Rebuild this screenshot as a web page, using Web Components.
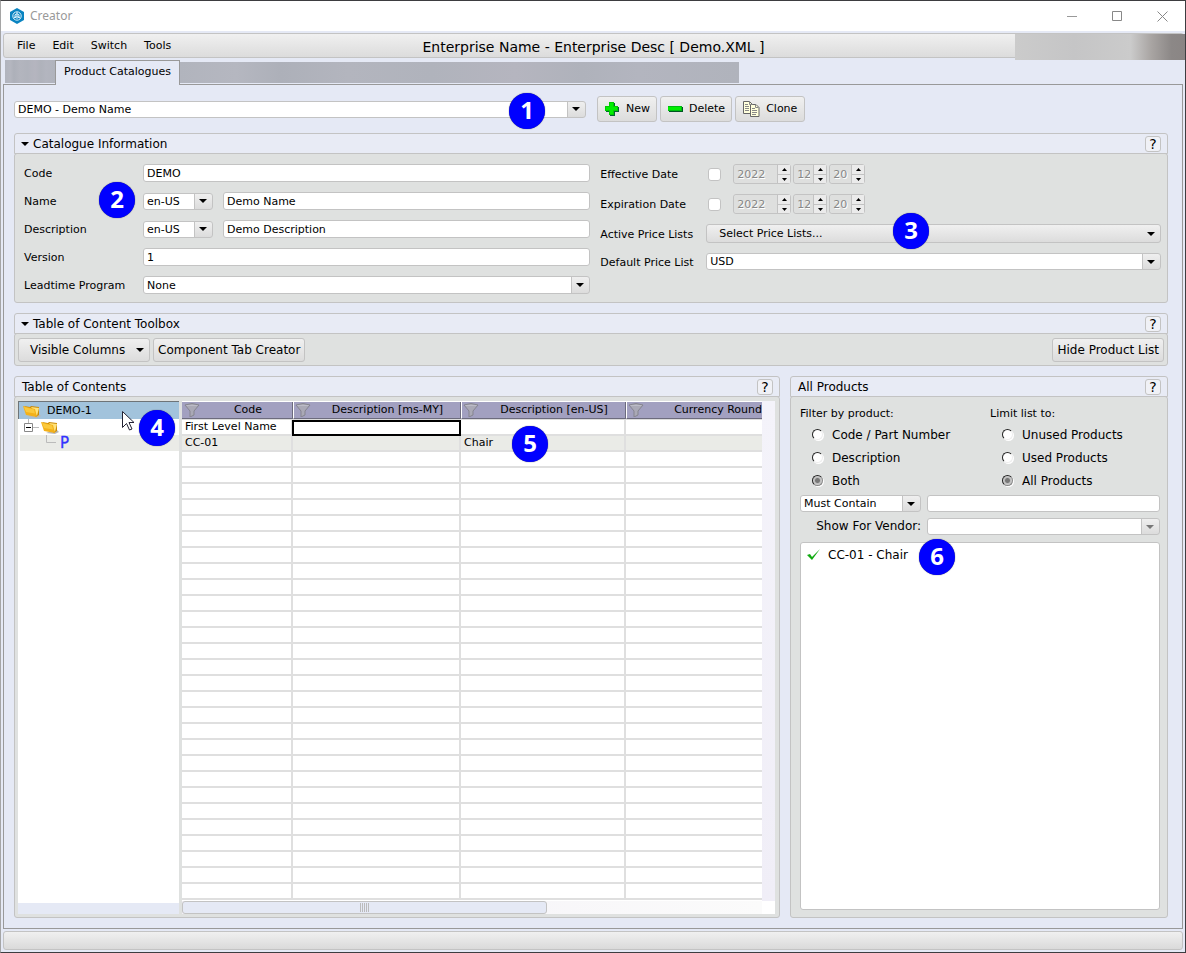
<!DOCTYPE html>
<html lang="en">
<head>
<meta charset="utf-8">
<title>Creator</title>
<style>
  body { margin: 0; background: #e5e9f5; color: #000; font: 11px/14px "DejaVu Sans", Verdana, sans-serif; }
</style>
</head>
<body>
<creator-app></creator-app>

<script>
const arrow = (c = '%23000') => `url("data:image/svg+xml,%3Csvg xmlns='http://www.w3.org/2000/svg' width='8' height='4'%3E%3Cpath d='M0 0h8L4 4z' fill='${c}'/%3E%3C/svg%3E")`;

const base = `
  *, *::before, *::after { box-sizing: border-box; }
  button, input, select { font: inherit; color: inherit; margin: 0; }
  input[type=text] {
    display: block; width: 100%; min-width: 0; height: 18px; padding: 0 3px;
    border: 1px solid #c3c3c3; border-radius: 3px; background: #fff; outline: 0;
  }
  select {
    appearance: none; display: block; width: 100%; height: 17px; padding: 0 20px 0 3px;
    line-height: 15px; border: 1px solid #c3c3c3; border-radius: 3px; outline: 0;
    background:
      ${arrow()} right 5px center no-repeat,
      linear-gradient(#c3c3c3, #c3c3c3) right 17px top / 1px 100% no-repeat,
      linear-gradient(#efefef, #dcdcdc) right top / 17px 100% no-repeat, #fff;
  }
  select:disabled {
    opacity: 1;
    background:
      ${arrow('%23777')} right 5px center no-repeat,
      linear-gradient(#c3c3c3, #c3c3c3) right 17px top / 1px 100% no-repeat,
      linear-gradient(#efefef, #dcdcdc) right top / 17px 100% no-repeat, #fff;
  }
  button {
    display: inline-flex; align-items: center; justify-content: center; gap: 6px; white-space: nowrap;
    border: 1px solid #c3c3c3; border-radius: 3px; padding: 0 6px;
    background: linear-gradient(#f0f0f0, #dcdcdc);
  }
  .drop { justify-content: space-between; padding: 0 5px 0 12px; }
  .drop::after { content: ""; width: 8px; height: 4px; background: ${arrow()}; }
`;

function define(name, css, html) {
  const template = document.createElement('template');
  template.innerHTML = `<style>${base}${css}</style>${html}`;
  customElements.define(name, class extends HTMLElement {
    constructor() {
      super();
      this.attachShadow({ mode: 'open' }).append(template.content.cloneNode(true));
    }
  });
}

/* Numbered marker that floats over the window */
define('call-out', `
  :host {
    position: absolute; width: 36px; height: 36px; border-radius: 50%; background: #00f; color: #fff;
    text-align: center; font: 700 24px/34px "Open Sans", "Noto Sans", sans-serif;
    box-shadow: 0 0 1px #333;
  }`, `<slot></slot>`);

/* Titled panel: header strip, optional fold arrow, help button, body */
define('ui-panel', `
  :host { display: flex; flex-direction: column; min-width: 0; }
  header {
    display: flex; align-items: center; height: 21px; padding: 1px 6px 0 7px;
    border: 1px solid #c3c3c3; border-radius: 3px 3px 0 0; background: #e8ebf5;
  }
  .title { flex: 1; font-size: 12px; }
  .fold { display: none; width: 8px; height: 4px; margin: 0 4px 0 -1px; background: ${arrow()}; }
  :host([foldable]) .fold { display: block; }
  header button { width: 16px; height: 16px; padding: 0; background: #f0f1f6; font-size: 14px; line-height: 14px; }
  .body {
    flex: 1; display: flex; flex-direction: column; margin-top: -1px;
    border: 1px solid #c3c3c3; border-radius: 3px; background: #dfe1e0;
  }
  ::slotted(*) { flex: 1; }`,
  `<header><span class="fold"></span><span class="title"><slot name="title"></slot></span>
   <button aria-label="Help">?</button></header>
   <div class="body"><slot></slot></div>`);

define('title-bar', `
  :host { display: flex; align-items: center; height: 30px; padding: 0 11px 0 8px; background: #fff; }
  .name { flex: 1; margin-left: 5px; color: #999; font: 12px/16px "Noto Sans", "Open Sans", sans-serif; }
  .controls { display: flex; gap: 21px; }
  button { width: 24px; height: 24px; padding: 0; border: 0; background: none; }
  svg { display: block; }`,
  `<svg width="16" height="16" viewBox="0 0 16 16"><path d="M8 0l7 4v8l-7 4-7-4V4z" fill="#0a84c1"/>
    <g fill="none" stroke="#d7f0fb" stroke-width="1"><circle cx="8" cy="8" r="4.2"/><path d="M8 4v4l3.4 2M8 8l-3.4 2M6 6.8L8 5.8l2 1v2.4l-2 1-2-1z"/></g></svg>
   <span class="name">Creator</span>
   <div class="controls">
    <button aria-label="Minimize"><svg width="11" height="11"><path d="M0 5.5h10" stroke="#999"/></svg></button>
    <button aria-label="Maximize"><svg width="11" height="11"><path d="M.5.5h9v9h-9z" fill="none" stroke="#888"/></svg></button>
    <button aria-label="Close"><svg width="11" height="11"><path d="M.5.5l10 10M10.5.5l-10 10" stroke="#888"/></svg></button>
   </div>`);

define('menu-bar', `
  :host {
    position: relative; display: grid; grid-template-columns: 1fr auto 1fr; align-items: center;
    height: 25px; margin: 2px 1px 0 2px; border: 1px solid #c3c3c3; border-radius: 3px;
    background: linear-gradient(#f0f0f0, #dcdcdc);
  }
  nav { display: flex; padding-left: 7px; }
  nav button { border: 0; padding: 0 6px; margin-right: 5px; background: none; }
  h1 { margin: 0; padding-top: 2px; font-size: 14px; line-height: 16px; font-weight: normal; }
  .veil {
    position: absolute; right: -2px; top: 0; width: 170px; height: 26px;
    background: linear-gradient(90deg, #cbcbcb, #c5c5c6 35%, #cbcbcb 68%, #a9a5a3 80%, #8c8887 92%, #8a8584);
  }`,
  `<nav><button>File</button><button>Edit</button><button>Switch</button><button>Tools</button></nav>
   <h1>Enterprise Name - Enterprise Desc [ Demo.XML ]</h1><span class="veil"></span>`);

define('tab-strip', `
  :host { display: flex; align-items: flex-end; height: 25px; margin: 2px 2px 0 4px; }
  .dim { height: 21px; margin-bottom: 2px; background: linear-gradient(90deg, #b1b4bd, #b5b7c0 10%, #adb0b9 18%, #b3b5be 30%, #b0b3bc 45%, #b5b5bf 60%, #afb2bb 72%, #b3b5bf 82%, #b0b3bc); }
  .first { width: 50px; height: 23px; }
  .rest { width: 559px; }
  button {
    position: relative; z-index: 1; align-items: flex-start; width: 125px; height: 25px; padding: 4px 0 0;
    border-color: #999; border-bottom: 0; border-radius: 0; background: #e5e9f5;
  }`,
  `<span class="dim first"></span><button role="tab" aria-selected="true">Product Catalogues</button><span class="dim rest"></span>`);

define('catalogue-picker', `
  :host { display: flex; align-items: center; gap: 3px; margin-bottom: 1px; }
  select { width: 50%; max-width: 572px; margin-right: 8px; }
  button { height: 26px; }
  button:last-child { padding: 0 7px; }
  svg { display: block; }`,
  `<select aria-label="Catalogue"><option>DEMO - Demo Name</option></select>
   <button><svg width="16" height="16"><path d="M6 2h5v4h4v5h-4v4H6v-4H2V6h4z" fill="#063"/><path d="M5 1h5v4h4v5h-4v4H5v-4H1V5h4z" fill="#0c0"/><path d="M6 2h3v4h4v3H9v4H6V9H2V6h4z" fill="#0e0"/></svg>New</button>
   <button><svg width="16" height="16"><path d="M2 6h14v5H2z" fill="#052"/><path d="M1 5h14v5H1z" fill="#0b1"/><path d="M1 6h13v3H1z" fill="#0e0"/></svg>Delete</button>
   <button><svg width="17" height="16"><g fill="#ffffdc" stroke="#666"><path d="M.5.5h6l3 3v9h-9z"/><path d="M7.500 3.500h5.500l3 3v9h-8.500z"/></g><path d="M6.500.5v3h3M12.500 3.500v3h3M2 3.500h3M2 5.500h4M2 7.500h4M2 9.500h4M9 7.500h3M9 9.500h5M9 11.500h5M9 13.500h4" fill="none" stroke="#888"/></svg>Clone</button>`);

/* Year, month and day, each with a stepper */
const spin = (label, value, width) => `<span class="spin" style="width:${width}px"><input type="text" aria-label="${label}" value="${value}" disabled><span class="steps"><button disabled aria-label="Increase"><svg width="5" height="3"><path d="M0 3h5L2.500 0z"/></svg></button><button disabled aria-label="Decrease"><svg width="5" height="3"><path d="M0 0h5L2.500 3z"/></svg></button></span></span>`;
const date = name => `<span class="date"><input type="checkbox" id="${name}">${spin(name + ' year', '2022', 58)}${spin(name + ' month', '12', 34)}${spin(name + ' day', '20', 36)}</span>`;

define('catalogue-form', `
  :host { display: grid; grid-template-columns: 101fr 100fr; column-gap: 10px; align-items: start; padding: 10px 6px 8px 9px; }
  .col { display: grid; row-gap: 10px; align-items: center; }
  .left { grid-template-columns: 119px 1fr; }
  .right { grid-template: 20px 20px 19px 17px / 106px 1fr; }
  .left > * { height: 18px; }
  label { line-height: 18px; height: 18px; padding-top: 1px; }
  .pair { display: grid; grid-template-columns: 70px 1fr; gap: 10px; align-items: center; }
  .date { display: flex; align-items: center; gap: 2px; height: 20px; }
  input[type=checkbox] { appearance: none; width: 13px; height: 13px; margin: 0 10px 0 2px; border: 1px solid #c3c3c3; border-radius: 3px; background: #fff; }
  .spin { display: flex; height: 20px; border: 1px solid #c3c3c3; border-radius: 3px; }
  .spin input { flex: 1; height: 18px; border: 0; background: #dedfde; color: #888; text-shadow: 1px 1px #fff; }
  .steps { display: grid; grid-template-rows: 9px 9px; width: 13px; border-left: 1px solid #c3c3c3; flex: none; }
  .steps button { padding: 0; border: 0; border-radius: 0; background: #ebebeb; }
  .steps button + button { border-top: 1px solid #c3c3c3; }
  .drop { height: 19px; width: 100%; }`,
  `<div class="col left">
    <label for="code">Code</label><input type="text" id="code" value="DEMO">
    <label for="name">Name</label><div class="pair"><select aria-label="Name language"><option>en-US</option></select><input type="text" id="name" value="Demo Name"></div>
    <label for="desc">Description</label><div class="pair"><select aria-label="Description language"><option>en-US</option></select><input type="text" id="desc" value="Demo Description"></div>
    <label for="version">Version</label><input type="text" id="version" value="1">
    <label for="lead">Leadtime Program</label><select id="lead"><option>None</option></select>
   </div>
   <div class="col right">
    <label for="effective">Effective Date</label>${date('effective')}
    <label for="expiration">Expiration Date</label>${date('expiration')}
    <label for="lists">Active Price Lists</label><button class="drop" id="lists">Select Price Lists...</button>
    <label for="price">Default Price List</label><select id="price"><option>USD</option></select>
   </div>`);

define('toolbox-bar', `
  :host { display: flex; gap: 3px; padding: 4px 3px 3px; font-size: 12px; }
  button { height: 24px; padding: 0 4px; }
  .drop { width: 132px; padding: 0 5px 0 11px; }
  .end { margin-left: auto; }`,
  `<button class="drop">Visible Columns</button><button>Component Tab Creator</button><button class="end">Hide Product List</button>`);

const folder = `<svg class="folder" width="18" height="15"><path d="M5 13l9 1 4-2-3-3z" fill="#b9b9b9"/><path d="M1 2l6 1 1-1 8 1v8l-3 2z" fill="#c98a08"/><path d="M8 3l8 1-2 8z" fill="#ffe27a"/><path d="M0 2l12 3 2 8-11-2z" fill="#f3b11a"/><path d="M1 3l10 2.500 1 4L3 8z" fill="#fbc93c"/></svg>`;

define('contents-tree', `
  :host { display: flex; flex-direction: column; background: #fff; border-bottom: 11px solid #e5e9f5; }
  ul { list-style: none; margin: 0; padding: 0; }
  li { display: flex; align-items: center; height: 16px; }
  .root { height: 18px; padding: 1px 0 0 4px; gap: 6px; background: #a2c3dc; border: solid #6e7478; border-width: 1px 0 0 1px; }
  .leaf { background: #eaebe7; margin-left: 2px; padding-left: 22px; color: #33f; font-size: 15px; -webkit-text-stroke: 0.3px #33f; }
  .branch { padding-left: 6px; }
  svg { display: block; flex: none; }`,
  `<ul><li class="root">${folder}<span>DEMO-1</span></li>
    <li class="branch"><svg width="17" height="16"><path d="M4.500 0v4M9 8.500h6" stroke="#bbb"/><path d="M.5 4.500h8v8h-8z" fill="#fff" stroke="#888"/><path d="M2 8.500h5" stroke="#000"/></svg>${folder}</li>
    <li class="leaf"><svg width="18" height="16"><path d="M4.500 0v7.500H14" fill="none" stroke="#bbb"/></svg>P</li></ul>`);

const funnel = `<svg width="16" height="15"><path d="M1 3Q8 0 15 3L10 9v4l-4 2V9z" fill="#aaa9b6" stroke="#85848f"/><path d="M2.500 3.500h11" stroke="#bcbcc6"/></svg>`;
const head = text => `<th><span>${funnel}<b>${text}</b></span></th>`;
const row = (a, b, c) => `<tr><td>${a}</td><td>${b}</td><td>${c}</td><td></td></tr>`;

define('contents-grid', `
  :host { display: grid; grid-template-columns: 1fr 13px; grid-template-rows: 1fr 13px; min-width: 0; background: #fff; }
  .view { overflow: hidden; min-width: 0; }
  table { table-layout: fixed; border-collapse: separate; border-spacing: 0; width: 100%; min-width: 544px; }
  col.a { width: 111px; } col.b { width: 168px; } col.c { width: 165px; }
  th { height: 19px; padding: 1px 0 0; border-bottom: 1px solid #dcdcdc; font-weight: normal; }
  th > span { display: flex; align-items: center; height: 17px; padding-left: 2px; background: #a2a0c0; border-right: 1px solid #6c6b7d; border-bottom: 1px solid #6c6b7d; }
  th + th > span { border-left: 1px solid #fff; padding-left: 1px; }
  th svg { flex: none; margin-top: -2px; }
  b { flex: 1; font-weight: normal; white-space: nowrap; overflow: hidden; padding-left: 4px; text-align: center; }
  th:last-child span { border-right: 0; }
  th:last-child b { text-align: right; padding: 0; }
  td { height: 16px; padding: 0 0 0 3px; line-height: 14px; white-space: nowrap; border-bottom: 2px solid #dfdfdf; border-right: 2px solid #dfdfdf; }
  td:last-child { border-right: 0; }
  tr:nth-child(2) td { background: #eaebe7; }
  tr:first-child td:nth-child(2) { border-color: #000; box-shadow: -1px 0 #000, inset 1px 2px #000; }
  .v { background: linear-gradient(#f4f3fa, #f0eef7); }
  .h { background: linear-gradient(90deg, #f2eff6, #fbfbfb); min-width: 0; }
  .thumb { width: 63%; height: 13px; border: 1px solid #c3c3c3; border-radius: 3px; background: #e5e9f5; display: grid; place-items: center; }
  .thumb i { width: 9px; height: 9px; background: repeating-linear-gradient(90deg, #bbb 0 1px, transparent 1px 2px); }`,
  `<div class="view"><table><colgroup><col class="a"><col class="b"><col class="c"><col></colgroup>
    <thead><tr>${head('Code')}${head('Description [ms-MY]')}${head('Description [en-US]')}${head('Currency Round')}</tr></thead>
    <tbody>${row('First Level Name', '', '')}${row('CC-01', '', 'Chair')}${row('', '', '').repeat(28)}</tbody></table></div>
   <div class="v"></div><div class="h"><div class="thumb"><i></i></div></div>`);

define('contents-view', `
  :host { display: grid; grid-template-columns: 161px 1fr; gap: 3px; padding: 4px 4px 3px 3px; }`,
  `<contents-tree></contents-tree><contents-grid></contents-grid>`);

const radio = (group, text, on = '') => `<label><input type="radio" name="${group}" ${on}><span>${text}</span></label>`;

define('product-filter', `
  :host { display: flex; flex-direction: column; padding: 7px 7px 7px 9px; font-size: 12px; }
  .groups { display: grid; grid-template-columns: 190px 1fr; margin-bottom: 3px; }
  fieldset { border: 0; margin: 0; padding: 0; display: grid; grid-template-rows: 19px repeat(3, 23px); }
  legend { float: left; padding: 0; font-size: 11px; line-height: 20px; }
  fieldset label { display: flex; align-items: center; gap: 9px; padding-left: 12px; }
  input[type=radio] {
    appearance: none; width: 11px; height: 11px; border-radius: 50%; background: #fff;
    border: 1px solid; border-color: #222 #eee #eee #222; box-shadow: 1px 1px #fff;
  }
  input[type=radio]:checked { background: radial-gradient(circle, #777 0 2px, #bbb 3px, #ddd 5px); border-color: #222 #888 #888 #222; }
  .query { display: grid; grid-template-columns: 121px 1fr; gap: 6px; align-items: center; margin-bottom: 7px; }
  .query > label { text-align: right; line-height: 17px; height: 17px; }
  .query select { font-size: 11px; }
  .query input { height: 17px; }
  ul { flex: 1; margin: 0; padding: 4px 6px; list-style: none; background: #fff; border: 1px solid #c3c3c3; border-radius: 3px; }
  li { display: flex; align-items: center; gap: 7px; height: 16px; }`,
  `<div class="groups">
    <fieldset><legend>Filter by product:</legend>${radio('by', 'Code / Part Number')}${radio('by', 'Description')}${radio('by', 'Both', 'checked')}</fieldset>
    <fieldset><legend>Limit list to:</legend>${radio('limit', 'Unused Products')}${radio('limit', 'Used Products')}${radio('limit', 'All Products', 'checked')}</fieldset>
   </div>
   <div class="query">
    <select aria-label="Match"><option>Must Contain</option></select><input type="text" aria-label="Search text">
    <label for="vendor">Show For Vendor:</label><select id="vendor" disabled><option></option></select>
   </div>
   <ul><li><svg width="14" height="12"><path d="M0 6l3-1 2 3 8-8-8 11z" fill="#1a1"/></svg>CC-01 - Chair</li></ul>`);

define('creator-app', `
  :host {
    position: relative; display: flex; flex-direction: column; min-height: 100vh; box-sizing: border-box;
    border: 1px solid #3d3d40; border-left-color: #a5a5a5; background: #e5e9f5;
  }
  main { flex: 1; display: flex; flex-direction: column; gap: 10px; margin: -1px 2px 2px; padding: 11px 14px 10px 10px; border: 1px solid #999; }
  .lower { flex: 1; display: grid; grid-template-columns: 1fr 378px; gap: 10px; }
  footer { height: 19px; margin: 0 2px 2px; border: 1px solid #c3c3c3; border-radius: 3px; background: linear-gradient(#f0f0f0, #dadada); }
  .cursor { position: absolute; left: 121px; top: 410px; }`,
  `<title-bar></title-bar><menu-bar></menu-bar><tab-strip></tab-strip>
   <main>
    <catalogue-picker></catalogue-picker>
    <ui-panel foldable><span slot="title">Catalogue Information</span><catalogue-form></catalogue-form></ui-panel>
    <ui-panel foldable><span slot="title">Table of Content Toolbox</span><toolbox-bar></toolbox-bar></ui-panel>
    <div class="lower">
     <ui-panel><span slot="title">Table of Contents</span><contents-view></contents-view></ui-panel>
     <ui-panel><span slot="title">All Products</span><product-filter></product-filter></ui-panel>
    </div>
   </main>
   <footer></footer>
   <svg class="cursor" width="13" height="20"><path d="M.5.5v16l4-4 3 6.500 2.500-1-3-6.500H12z" fill="#fff" stroke="#223"/></svg>
   <call-out style="left:508px;top:92px">1</call-out>
   <call-out style="left:98px;top:181px">2</call-out>
   <call-out style="right:256px;top:212px">3</call-out>
   <call-out style="left:138px;top:409px">4</call-out>
   <call-out style="left:511px;top:425px">5</call-out>
   <call-out style="right:230px;top:538px">6</call-out>`);
</script>
</body>
</html>
